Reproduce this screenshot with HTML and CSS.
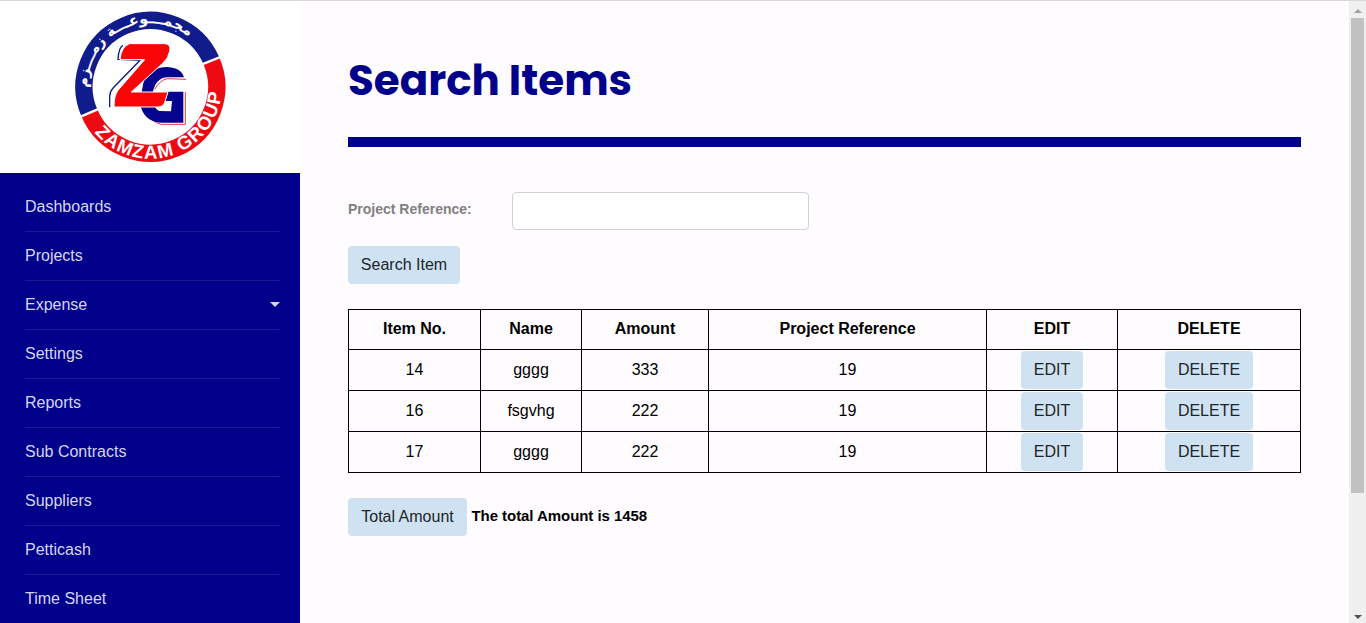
FILE: index.html
```html
<!DOCTYPE html>
<html lang="en">
<head>
<meta charset="utf-8">
<title>Search Items</title>
<link rel="stylesheet" href="styles.css">
</head>
<body>
<div class="page">
  <aside class="sidebar">
    <div class="brand">
      <svg class="logo" viewBox="45 33 450 450" role="img" aria-label="Zamzam Group">
        <defs>
          <path id="arcTop" d="M94 318 A186 186 0 1 1 445 194"/>
          <path id="arcBottom" d="M57 290 A215 215 0 0 0 485 258 A215 215 0 0 0 478 205"/>
        </defs>
        <path d="M88.2 339 A199 199 0 1 1 454 182" fill="none" stroke="#101c8c" stroke-width="52"/>
        <path d="M454 182 A199 199 0 0 1 88.2 339" fill="none" stroke="#ee0a12" stroke-width="52"/>
        <path d="M424 194 L484 170 M62 350 L118 326" stroke="#fff" stroke-width="7"/>
        <text class="logo-arabic" text-anchor="middle"><textPath href="#arcTop" startOffset="46%">مجمـــوعـــة زمـــزم</textPath></text>
        <text class="logo-latin"><textPath href="#arcBottom" startOffset="118" textLength="510" lengthAdjust="spacing">ZAMZAM GROUP</textPath></text>
        <path d="M189 136 Q176 142 174 178 L240 181 L160 263 Q149 276 149 290 L149 322" fill="none" stroke="#101c8c" stroke-width="4"/>
        <path d="M378 238 L322 236 Q300 240 284 268 M376 276 L376 373 L302 373 Q276 366 258 337" fill="none" stroke="#ee3540" stroke-width="3"/>
        <path d="M372 232 Q362 201 318 201 Q260 205 250 250 L239 307 Q249 364 300 368 L370 368 L370 275 L314 275 L300 303 L336 303 L333 334 L297 333 Q277 323 278 280 Q286 233 323 232 Z" fill="#04048f"/>
        <path d="M209 131 L316 131 Q334 134 329 153 Q326 174 308 190 L214 276 L324 276 L314 308 Q308 321 292 321 L162 321 Q162 287 174 271 L254 179 L180 179 Q184 139 209 131 Z" fill="#fa0505" stroke="#fff" stroke-width="3"/>
      </svg>
    </div>
    <nav class="menu">
      <a class="menu-item">Dashboards</a>
      <a class="menu-item">Projects</a>
      <a class="menu-item">Expense<span class="caret"></span></a>
      <a class="menu-item">Settings</a>
      <a class="menu-item">Reports</a>
      <a class="menu-item">Sub Contracts</a>
      <a class="menu-item">Suppliers</a>
      <a class="menu-item">Petticash</a>
      <a class="menu-item">Time Sheet</a>
    </nav>
  </aside>
  <main class="content">
    <h1 class="title">Search Items</h1>
    <div class="rule"></div>
    <div class="field">
      <label class="label" for="ref">Project Reference:</label>
      <input class="input" id="ref" type="text">
    </div>
    <button class="btn">Search Item</button>
    <table class="items">
      <colgroup><col class="c-no"><col class="c-name"><col class="c-amount"><col class="c-ref"><col class="c-edit"><col class="c-delete"></colgroup>
      <tr class="head"><th>Item No.</th><th>Name</th><th>Amount</th><th>Project Reference</th><th>EDIT</th><th>DELETE</th></tr>
      <tr><td>14</td><td>gggg</td><td>333</td><td>19</td><td><button class="btn btn-edit">EDIT</button></td><td><button class="btn btn-delete">DELETE</button></td></tr>
      <tr><td>16</td><td>fsgvhg</td><td>222</td><td>19</td><td><button class="btn btn-edit">EDIT</button></td><td><button class="btn btn-delete">DELETE</button></td></tr>
      <tr><td>17</td><td>gggg</td><td>222</td><td>19</td><td><button class="btn btn-edit">EDIT</button></td><td><button class="btn btn-delete">DELETE</button></td></tr>
    </table>
    <div class="total">
      <button class="btn btn-total">Total Amount</button>
      <b class="total-text">The total Amount is 1458</b>
    </div>
  </main>
  <div class="scrollbar">
    <span class="arrow-up"></span>
    <span class="thumb"></span>
    <span class="arrow-down"></span>
  </div>
</div>
</body>
</html>
```
FILE: styles.css
```css
* { box-sizing: border-box; }
body {
  margin: 0;
  overflow: hidden;
  background: #fffcff;
  font-family: "Liberation Sans", Arial, sans-serif;
  font-size: 16px;
  line-height: 24px;
  color: #000;
}
.page {
  display: flex;
  height: 623px;
  border-top: 1px solid #d9d9d9;
}
.sidebar {
  width: 300px;
  flex: none;
  background: #00008b;
  overflow: hidden;
}
.brand {
  height: 172px;
  padding-top: 10px;
  background: #fff;
  text-align: center;
}
.logo { width: 150px; height: 150px; display: block; margin: 0 auto; overflow: visible; }
.logo-arabic {
  font: bold 43px "DejaVu Sans", sans-serif;
  fill: #fff;
}
.logo-latin {
  font: bold 56px "Liberation Sans", Arial, sans-serif;
  fill: #fff;
}
.menu { padding: 10px 20px 0 25px; }
.menu-item {
  display: flex;
  align-items: center;
  justify-content: space-between;
  height: 49px;
  padding-bottom: 1px;
  border-bottom: 1px solid #1a1a97;
  color: #d6d6f0;
}
.caret {
  border: 5px solid transparent;
  border-top-color: #d6d6f0;
  border-bottom: 0;
}
.content {
  flex: 1;
  padding: 48px 48px 0;
}
.title {
  margin: 0;
  height: 88px;
  color: #00008b;
  font: bold 42px/63px Poppins, Inter, sans-serif;
  white-space: nowrap;
}
.rule { height: 10px; background: #00008b; }
.field {
  display: flex;
  align-items: flex-start;
  margin: 45px 0 16px;
}
.label {
  width: 164px;
  padding-top: 5px;
  color: gray;
  font-weight: bold;
  font-size: 14px;
}
.input {
  width: 297px;
  height: 38px;
  border: 1px solid #ced4da;
  border-radius: 4px;
  background: #fff;
}
.btn {
  display: block;
  width: 112px;
  height: 38px;
  padding: 0;
  border: 0;
  border-radius: 4px;
  background: #cfe2f2;
  color: #212529;
  font: 16px/24px "Liberation Sans", Arial, sans-serif;
}
.btn-edit { width: 62px; margin: 0 auto; }
.btn-delete { width: 88px; margin: 0 auto; }
.btn-total { width: 119px; }
.items {
  width: 953px;
  margin-top: 25px;
  table-layout: fixed;
  border-collapse: collapse;
  text-align: center;
}
.items th, .items td { border: 1px solid #000; padding: 1px; height: 41px; }
.items .head th { height: 40px; padding: 0 1px 2px; }
.c-no { width: 132px; }
.c-name { width: 101px; }
.c-amount { width: 127px; }
.c-ref { width: 278px; }
.c-edit { width: 131px; }
.c-delete { width: 183px; }
.total {
  display: flex;
  align-items: center;
  gap: 4.5px;
  margin-top: 25px;
}
.total-text { font-size: 15px; letter-spacing: -0.06px; padding-bottom: 2px; }
.scrollbar {
  display: flex;
  flex-direction: column;
  align-items: center;
  width: 17px;
  background: #f0f0f0;
}
.arrow-up {
  margin: 8px 0 5px;
  border: 4px solid transparent;
  border-top: 0;
  border-bottom-color: #a3a3a3;
}
.thumb { width: 13px; height: 475px; background: #c1c1c1; }
.arrow-down {
  margin-top: auto;
  margin-bottom: 4px;
  border: 4px solid transparent;
  border-bottom: 0;
  border-top-color: #505050;
}
```
